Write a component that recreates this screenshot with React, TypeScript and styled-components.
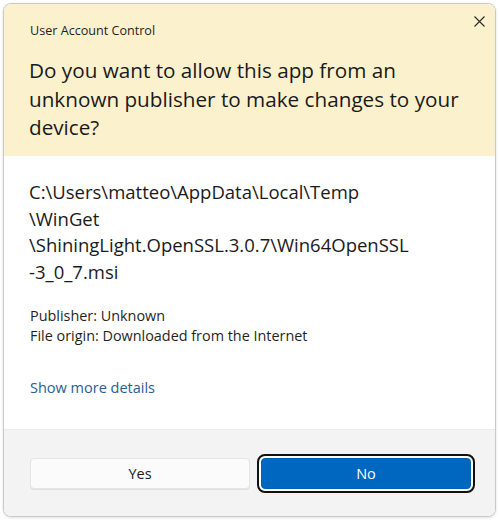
import React from "react";
import styled, { createGlobalStyle } from "styled-components";

const Global = createGlobalStyle`
  html, body { margin: 0; padding: 0; background: #ffffff; }
  body { font-family: "Open Sans", "Noto Sans", sans-serif; color: #1b1b1b; }
  * { box-sizing: border-box; }
`;

const Page = styled.div`
  width: 500px;
  height: 520px;
  padding: 3px 4px 3px 3px;
`;

const Window = styled.div`
  width: 493px;
  height: 514px;
  display: flex;
  flex-direction: column;
  border: 1px solid #c9c9c9;
  border-radius: 8px;
  overflow: hidden;
  background: #ffffff;
  box-shadow: 0 1px 3px rgba(0, 0, 0, 0.12);
`;

const Header = styled.div`
  background: #fcf1cd;
  height: 152px;
  padding: 18px 0 0 26px;
  position: relative;
`;

const Caption = styled.div`
  font-size: 12.6px;
  line-height: 18px;
  color: #1f1f1f;
`;

const CloseButton = styled.button`
  position: absolute;
  top: 7px;
  right: 6px;
  width: 20px;
  height: 20px;
  padding: 0;
  border: 0;
  background: transparent;
  display: flex;
  align-items: center;
  justify-content: center;
  color: #2a2a2a;
`;

const Heading = styled.h1`
  margin: 16px 0 0 -1px;
  font-weight: 400;
  font-size: 20.7px;
  line-height: 28.5px;
  color: #1a1a1a;
`;

const Line = styled.span`
  display: block;
  white-space: nowrap;
`;

const Body = styled.div`
  flex: 1;
  padding: 23px 0 0 26px;
  display: flex;
  flex-direction: column;
`;

const PathText = styled.div`
  font-size: 18.5px;
  line-height: 26.5px;
  color: #1a1a1a;
  margin-left: -1px;
`;

const Details = styled.div`
  margin-top: 21px;
  font-size: 14.4px;
  line-height: 19.5px;
  color: #1f1f1f;
`;

const Link = styled.a`
  margin-top: 33px;
  font-size: 14.5px;
  line-height: 20px;
  color: #275e93;
  text-decoration: none;
`;

const Footer = styled.div`
  height: 87px;
  background: #f3f3f3;
  border-top: 1px solid #ececec;
  display: flex;
  align-items: center;
  padding: 0 24px 0 26px;
  gap: 11px;
`;

const Button = styled.button<{ $primary?: boolean }>`
  height: 31px;
  width: ${(p) => (p.$primary ? "210px" : "220px")};
  border-radius: 4px;
  font-family: inherit;
  font-size: 14.5px;
  cursor: pointer;
  border: 1px solid ${(p) => (p.$primary ? "#0061b8" : "#e5e5e5")};
  background: ${(p) => (p.$primary ? "#0067c0" : "#fbfbfb")};
  color: ${(p) => (p.$primary ? "#ffffff" : "#1b1b1b")};
  outline: ${(p) => (p.$primary ? "2px solid #111111" : "none")};
  outline-offset: 2px;
  box-shadow: ${(p) => (p.$primary ? "0 0 0 2px #ffffff" : "0 1px 0 #e0e0e0")};
`;

export default function App() {
  return (
    <>
      <Global />
      <Page>
        <Window>
          <Header>
            <Caption>User Account Control</Caption>
            <CloseButton aria-label="Close">
              <svg width="11" height="11" viewBox="0 0 11 11">
                <path d="M0.5 0.5 L10.5 10.5 M10.5 0.5 L0.5 10.5" stroke="currentColor" strokeWidth="1.1" fill="none" />
              </svg>
            </CloseButton>
            <Heading>
              <Line>Do you want to allow this app from an</Line>
              <Line>unknown publisher to make changes to your</Line>
              <Line>device?</Line>
            </Heading>
          </Header>
          <Body>
            <PathText>
              <Line>C:\Users\matteo\AppData\Local\Temp</Line>
              <Line>\WinGet</Line>
              <Line>\ShiningLight.OpenSSL.3.0.7\Win64OpenSSL</Line>
              <Line>-3_0_7.msi</Line>
            </PathText>
            <Details>
              <Line>Publisher: Unknown</Line>
              <Line>File origin: Downloaded from the Internet</Line>
            </Details>
            <Link href="#">Show more details</Link>
          </Body>
          <Footer>
            <Button>Yes</Button>
            <Button $primary>No</Button>
          </Footer>
        </Window>
      </Page>
    </>
  );
}
